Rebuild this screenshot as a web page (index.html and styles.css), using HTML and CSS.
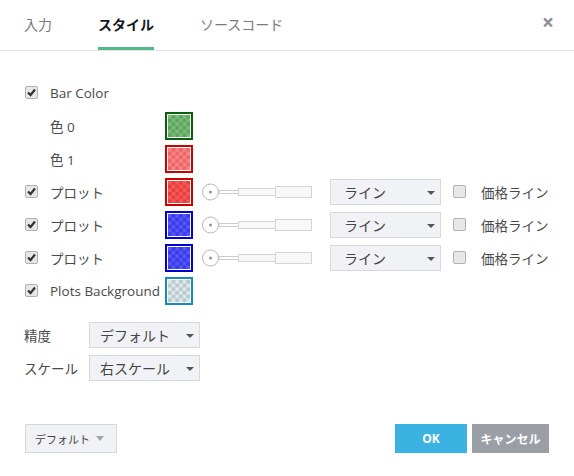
FILE: index.html
```html
<!DOCTYPE html>
<html lang="ja">
<head>
    <meta charset="UTF-8">
    <title>スタイル</title>
    <link rel="stylesheet" href="styles.css">
</head>
<body>
    <div class="dialog">
        <div class="header">
            <div class="tab">入力</div>
            <div class="tab active">スタイル</div>
            <div class="tab">ソースコード</div>
            <div class="close">&#215;</div>
        </div>

        <div class="content">
            <div class="row">
                <span class="check on"></span>
                <span class="label">Bar Color</span>
            </div>
            <div class="row">
                <span class="spacer"></span>
                <span class="label">色 0</span>
                <span class="swatch green"><i></i></span>
            </div>
            <div class="row">
                <span class="spacer"></span>
                <span class="label">色 1</span>
                <span class="swatch pink"><i></i></span>
            </div>
            <div class="row">
                <span class="check on"></span>
                <span class="label">プロット</span>
                <span class="swatch red"><i></i></span>
                <span class="slider"></span>
                <span class="select wide">ライン<b class="arrow"></b></span>
                <span class="check"></span>
                <span class="label-sm">価格ライン</span>
            </div>
            <div class="row">
                <span class="check on"></span>
                <span class="label">プロット</span>
                <span class="swatch blue"><i></i></span>
                <span class="slider"></span>
                <span class="select wide">ライン<b class="arrow"></b></span>
                <span class="check"></span>
                <span class="label-sm">価格ライン</span>
            </div>
            <div class="row">
                <span class="check on"></span>
                <span class="label">プロット</span>
                <span class="swatch blue"><i></i></span>
                <span class="slider"></span>
                <span class="select wide">ライン<b class="arrow"></b></span>
                <span class="check"></span>
                <span class="label-sm">価格ライン</span>
            </div>
            <div class="row">
                <span class="check on"></span>
                <span class="label">Plots Background</span>
                <span class="swatch bg"><i></i></span>
            </div>

            <div class="row field first">
                <span class="field-label">精度</span>
                <span class="select">デフォルト<b class="arrow"></b></span>
            </div>
            <div class="row field">
                <span class="field-label">スケール</span>
                <span class="select">右スケール<b class="arrow"></b></span>
            </div>
        </div>

        <div class="footer">
            <span class="btn-default">デフォルト<b class="arrow light"></b></span>
            <span class="btn ok">OK</span>
            <span class="btn cancel">キャンセル</span>
        </div>
    </div>
</body>
</html>
```

FILE: styles.css
```css
body {
    margin: 0;
    background: #fff;
    font-family: "Open Sans", "Noto Sans CJK JP", sans-serif;
    color: #4a4a4a;
}

.dialog {
    width: 574px;
    height: 476px;
    display: flex;
    flex-direction: column;
}

.header {
    height: 50px;
    border-bottom: 1px solid #e0e3eb;
    display: flex;
    padding-left: 24px;
    gap: 46px;
}

.tab {
    height: 47px;
    border-bottom: 3px solid transparent;
    display: flex;
    align-items: center;
    font-size: 14px;
    color: #787b86;
}

.tab.active {
    color: #131722;
    font-weight: bold;
    border-bottom-color: #53b987;
}

.close {
    margin-left: auto;
    padding-right: 20px;
    height: 44px;
    display: flex;
    align-items: center;
    font-size: 21px;
    font-weight: bold;
    color: #8a8e96;
}

.content {
    padding: 25px 0 0 25px;
}

.row {
    height: 33px;
    display: flex;
    align-items: center;
    font-size: 13px;
}

.spacer {
    width: 25px;
}

.label {
    width: 115px;
    font-size: 13.5px;
}

.label-sm {
    margin-left: 15px;
    font-size: 13.5px;
}

.check {
    width: 13px;
    height: 13px;
    box-sizing: border-box;
    margin-right: 12px;
    border: 1px solid #aeb1b6;
    border-radius: 2px;
    background: #e6e7e9;
}

.check.on {
    background: #e6e7e9 url("data:image/svg+xml,%3Csvg xmlns='http://www.w3.org/2000/svg' width='11' height='11'%3E%3Cpath d='M2 5.5 L4.5 8 L9 2.5' fill='none' stroke='%23333' stroke-width='2.2'/%3E%3C/svg%3E") center/11px 11px no-repeat;
}

.row .check:not(:first-child) {
    margin: 0 0 0 12px;
}

.swatch {
    width: 28px;
    height: 28px;
    box-sizing: border-box;
    border: 2px solid;
    padding: 1px;
    background: #fff;
}

.swatch i {
    display: block;
    width: 22px;
    height: 22px;
    background: repeating-conic-gradient(var(--c1) 0 25%, var(--c2) 0 50%) 0 0 / 7.34px 7.34px;
}

.swatch.green { border-color: #0b5e0b; --c1: #5ea55e; --c2: #76bb76; }
.swatch.pink { border-color: #c80000; --c1: #ee6666; --c2: #f58585; }
.swatch.red { border-color: #c80000; --c1: #ee3d3d; --c2: #f25a5a; }
.swatch.blue { border-color: #0000cc; --c1: #3a3aee; --c2: #5656f2; }
.swatch.bg { border-color: #138bc0; --c1: #b9c9cd; --c2: #dfe7e9; }

.slider {
    width: 110px;
    height: 18px;
    margin: 0 18px 0 9px;
    background: url("data:image/svg+xml,%3Csvg xmlns='http://www.w3.org/2000/svg' width='110' height='18'%3E%3Crect x='17' y='7.5' width='20' height='3' fill='%23fff' stroke='%23c9ccd1'/%3E%3Crect x='36.5' y='5.5' width='37' height='7' fill='%23f8f8f8' stroke='%23d3d5d9'/%3E%3Crect x='73.5' y='3.5' width='36' height='11' fill='%23f8f8f8' stroke='%23d3d5d9'/%3E%3Ccircle cx='8.5' cy='9' r='8' fill='%23fff' stroke='%23b4b8c0'/%3E%3Ccircle cx='8.5' cy='9' r='1.6' fill='%23999'/%3E%3C/svg%3E") no-repeat;
}

.select {
    position: relative;
    width: 111px;
    height: 26px;
    box-sizing: border-box;
    border: 1px solid #d6d9de;
    background: #f1f2f6;
    padding-left: 10px;
    display: flex;
    align-items: center;
    font-size: 14px;
    color: #444;
}

.select.wide {
    padding-left: 13px;
}

.arrow {
    position: absolute;
    right: 5px;
    top: 11px;
    border-left: 4px solid transparent;
    border-right: 4px solid transparent;
    border-top: 4px solid #555;
}

.arrow.light {
    position: static;
    margin-left: 6px;
    border-top-color: #a0a3a8;
    border-left-width: 4.5px;
    border-right-width: 4.5px;
    border-top-width: 5px;
}

.field {
    margin-left: -1px;
}

.field.first {
    margin-top: 11px;
}

.field-label {
    width: 65px;
    font-size: 13.5px;
}

.footer {
    margin-top: auto;
    padding: 0 25px 23px 25px;
    display: flex;
    align-items: center;
}

.btn-default {
    height: 29px;
    box-sizing: border-box;
    padding: 0 12px 0 9px;
    border: 1px solid #d6d9de;
    background: #f1f2f6;
    display: flex;
    align-items: center;
    font-size: 11px;
    color: #444;
}

.btn {
    height: 29px;
    display: flex;
    align-items: center;
    justify-content: center;
    color: #fff;
    font-size: 12px;
    font-weight: bold;
}

.btn.ok {
    margin-left: auto;
    width: 72px;
    background: #3cb2e3;
}

.btn.cancel {
    margin-left: 5px;
    width: 77px;
    background: #9b9ea5;
}
```
